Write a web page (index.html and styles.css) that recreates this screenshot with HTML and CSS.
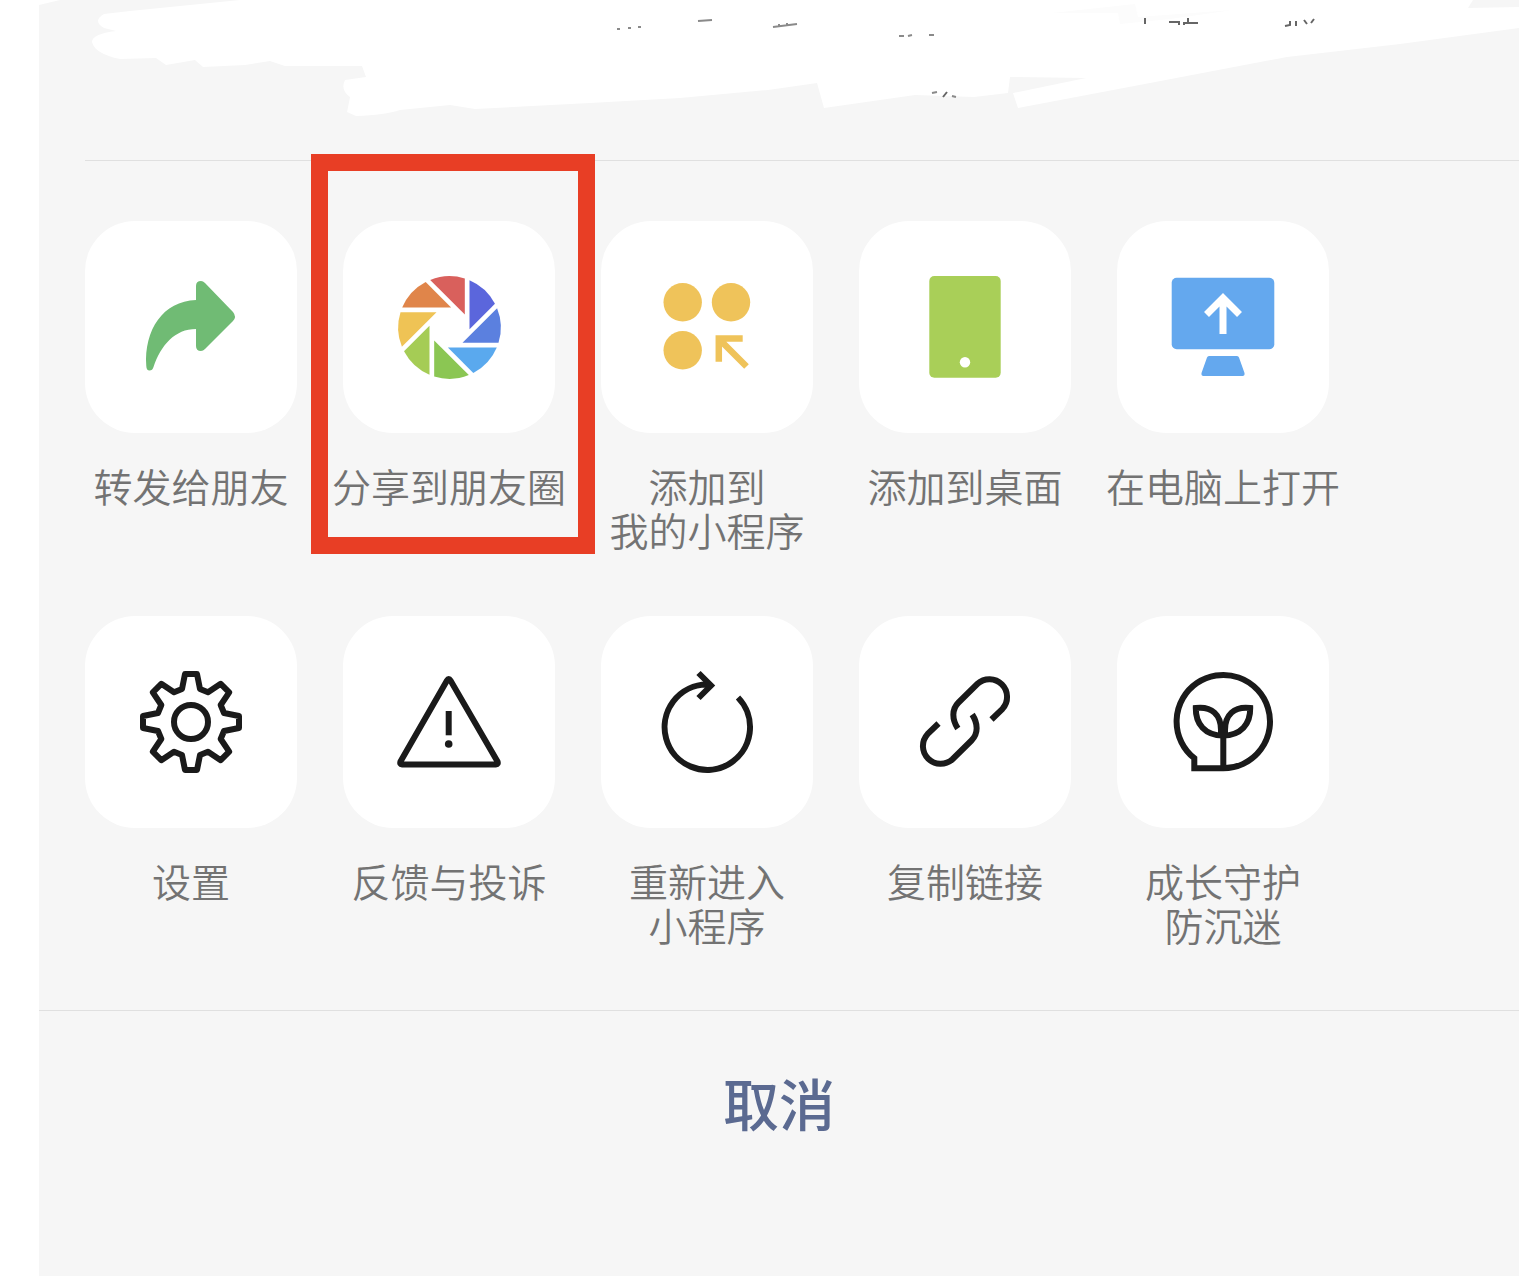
FILE: index.html
```html
<!DOCTYPE html>
<html lang="zh-CN">
<head>
    <meta charset="UTF-8">
    <meta name="viewport" content="width=device-width, initial-scale=1.0">
    <title>小程序菜单</title>
    <link rel="stylesheet" href="styles.css">
</head>
<body>
    <main class="sheet">
        <header class="sheet-header">
            <!-- 涂抹遮盖的标题 -->
            <svg class="smear" viewBox="39 0 1480 160" aria-hidden="true">
                <g fill="#fff">
                    <path d="M39 0H60L39 5Z"/>
                    <path d="M240 0L180 6L130 11L104 14Q92 21 104 28L116 31Q92 34 92 42Q95 54 120 59L156 58L166 65L195 60L203 67L245 65L270 61L285 66L362 66L366 77L345 80Q340 90 350 97L347 112L356 116Q385 115 400 110L450 105L475 109L590 103L680 98L768 90L817 83L824 108L915 95L974 97L1008 93L1010 77L1086 78L1013 93L1018 108L1150 83L1287 57L1400 44L1519 28V7L1468 8L1473 0Z"/>
                </g>
                <path d="M1052 13L1135 4L1138 17L1233 10L1170 19L1120 24L1118 13Z" fill="#fcfcfc"/>
                <g fill="none" stroke="#8a8a8a" stroke-width="2">
                    <path d="M617 29h3M628 28h3M638 27h3M698 21l14-1M773 27l24-3M779 24v3M787 23v3M899 36h5M908 36l4-1M929 35h5M932 93l5-1M952 96l4 1"/>
                    <path d="M943 97l4-5M1145 18v6M1169 22h10v3M1183 23h15M1184 25v-3M1188 18v5M1285 26l5-1v-4M1296 21v5M1304 20l3 4M1314 19l-3 4" stroke="#666"/>
                </g>
            </svg>
        </header>

        <section class="actions">
            <button class="action" type="button">
                <span class="tile">
                    <svg class="icon" viewBox="0 0 120 120" fill="#70bb74">
                        <path d="M65 33V19Q65 14 70 14Q72 14 74 16L102 45Q106 50 102 54L74 82Q72 84 70 84Q65 84 65 79V62C44 62 30 78 22.500 100Q21.500 103.500 18.500 103.500Q15.500 103.500 15.300 99C13 63 32 34 65 33Z"/>
                    </svg>
                </span>
                <span class="label">转发给朋友</span>
            </button>
            <button class="action highlighted" type="button">
                <span class="tile">
                    <svg class="icon" viewBox="0 0 120 120">
                        <defs>
                            <path id="blade" d="M-19.300 -47.600A51.400 51.400 0 0 1 15.300 -49V-13Z"/>
                        </defs>
                        <g transform="translate(60.500 60.500)">
                            <use href="#blade" fill="#d9605c"/>
                            <use href="#blade" fill="#5b66dc" transform="rotate(45)"/>
                            <use href="#blade" fill="#5b80df" transform="rotate(90)"/>
                            <use href="#blade" fill="#5aa9ee" transform="rotate(135)"/>
                            <use href="#blade" fill="#8bc653" transform="rotate(180)"/>
                            <use href="#blade" fill="#a5cc55" transform="rotate(225)"/>
                            <use href="#blade" fill="#efc355" transform="rotate(270)"/>
                            <use href="#blade" fill="#e0854a" transform="rotate(315)"/>
                        </g>
                    </svg>
                </span>
                <span class="label">分享到朋友圈</span>
            </button>
            <button class="action" type="button">
                <span class="tile">
                    <svg class="icon" viewBox="0 0 120 120" fill="#efc35a">
                        <circle cx="35.700" cy="35.300" r="19.200"/>
                        <circle cx="84" cy="35.300" r="19.200"/>
                        <circle cx="35.700" cy="83.300" r="19.200"/>
                        <path d="M71.800 94.700V71.500H95.700M73 73L99.500 99.500" fill="none" stroke="#efc35a" stroke-width="6.500"/>
                    </svg>
                </span>
                <span class="label">添加到<br>我的小程序</span>
            </button>
            <button class="action" type="button">
                <span class="tile">
                    <svg class="icon" viewBox="0 0 120 120">
                        <rect x="24.300" y="9" width="71.400" height="101.700" rx="5" fill="#a9cf58"/>
                        <circle cx="60" cy="95.300" r="5.200" fill="#fff"/>
                    </svg>
                </span>
                <span class="label">添加到桌面</span>
            </button>
            <button class="action" type="button">
                <span class="tile">
                    <svg class="icon" viewBox="0 0 120 120" fill="#64a8ee">
                        <rect x="8.700" y="10.700" width="102.600" height="71.600" rx="5"/>
                        <path d="M46 89H74Q75.500 89 76 90.500L81.500 106Q82 109 79.500 109H40.500Q38 109 38.500 106L44 90.500Q44.500 89 46 89Z"/>
                        <path d="M60 67V31M43.500 47.500L60 31L76.500 47.500" fill="none" stroke="#fff" stroke-width="7"/>
                    </svg>
                </span>
                <span class="label">在电脑上打开</span>
            </button>

            <button class="action" type="button">
                <span class="tile">
                    <svg class="icon line-icon" viewBox="0 0 120 120">
                        <path d="M51 27L54 12H66L69 27L77 30.300L89.700 21.800L98.200 30.300L89.700 43L93 51L108 54V66L93 69L89.700 77L98.200 89.700L89.700 98.200L77 89.700L69 93L66 108H54L51 93L43 89.700L30.300 98.200L21.800 89.700L30.300 77L27 69L12 66V54L27 51L30.300 43L21.800 30.300L30.300 21.800L43 30.300Z" stroke-linejoin="round"/>
                        <circle cx="60" cy="60" r="17"/>
                    </svg>
                </span>
                <span class="label">设置</span>
            </button>
            <button class="action" type="button">
                <span class="tile">
                    <svg class="icon line-icon" viewBox="0 0 120 120">
                        <path d="M58 18.500Q59.700 15.500 61.500 18.500L108.500 99.500Q109.500 102.500 107 102.500H13Q10.500 102.500 11.500 99.500Z" stroke-linejoin="round"/>
                        <path d="M59.700 49V73.300"/>
                        <circle cx="59.700" cy="82" r="3.800" fill="#1a1a1a" stroke="none"/>
                    </svg>
                </span>
                <span class="label">反馈与投诉</span>
            </button>
            <button class="action" type="button">
                <span class="tile">
                    <svg class="icon line-icon" viewBox="0 0 120 120">
                        <path d="M91 35.500A42.700 42.700 0 1 1 59.700 22.500L64 23"/>
                        <path d="M51.500 11L64 23.500L51.500 36"/>
                    </svg>
                </span>
                <span class="label">重新进入<br>小程序</span>
            </button>
            <button class="action" type="button">
                <span class="tile">
                    <svg class="icon line-icon" viewBox="0 0 120 120">
                        <path id="link-half" d="M86.500 57.500L97.500 46.800A17.700 17.700 0 0 0 72.500 21.800L53.500 40.500C46.500 47.500 47 57.500 52.800 66.500"/>
                        <use href="#link-half" transform="rotate(180 60 59.500)"/>
                    </svg>
                </span>
                <span class="label">复制链接</span>
            </button>
            <button class="action" type="button">
                <span class="tile">
                    <svg class="icon line-icon" viewBox="0 0 120 120">
                        <path d="M60.300 106.300H31.300V96.200A46.700 46.700 0 1 1 60.300 106.300V72"/>
                        <path d="M60 73.500C42 73.500 32.500 62 32.800 46C49 44 58 53 58 68V73.500"/>
                        <path d="M60 73.500C78 73.500 87.500 62 87.200 46C71 44 62 53 62 68V73.500"/>
                    </svg>
                </span>
                <span class="label">成长守护<br>防沉迷</span>
            </button>
        </section>

        <button class="cancel" type="button">取消</button>
    </main>
</body>
</html>
```
FILE: styles.css
```css
* {
    box-sizing: border-box;
}
body {
    margin: 0;
    background-color: #fff;
    font-family: "Noto Sans CJK SC", sans-serif;
}
button {
    padding: 0;
    border: none;
    background: none;
    font-family: inherit;
    cursor: pointer;
}
.sheet {
    min-height: 100vh;
    margin: 0 17px 0 39px;
    background-color: #f6f6f6;
}
.sheet-header {
    display: flow-root;
}
.smear {
    display: block;
    width: 100%;
}
.actions {
    display: grid;
    grid-template-columns: repeat(5, 258px);
    row-gap: 65px;
    padding: 61px 0 64px 23px;
    position: relative;
}
.actions::before {
    content: "";
    position: absolute;
    top: 0;
    left: 46px;
    right: 0;
    border-top: 1px solid #e0e0e0;
}
.action {
    position: relative;
    display: flex;
    flex-direction: column;
    align-items: center;
    gap: 30px;
}
.tile {
    display: flex;
    align-items: center;
    justify-content: center;
    width: 212px;
    height: 212px;
    border-radius: 50px;
    background-color: #fff;
}
.icon {
    width: 120px;
    height: 120px;
}
.line-icon {
    fill: none;
    stroke: #1a1a1a;
    stroke-width: 6;
}
.label {
    color: #737373;
    font-size: 39px;
    font-weight: 350;
    line-height: 44px;
    white-space: nowrap;
}
/* 红框标注 */
.highlighted::after {
    content: "";
    position: absolute;
    top: -67px;
    left: -9px;
    right: -17px;
    bottom: -3px;
    border: 17px solid #e83e25;
}
.cancel {
    display: block;
    width: 100%;
    padding: 59px 0;
    border-top: 1px solid #e0e0e0;
    color: #5b6a91;
    font-size: 56px;
    font-weight: 500;
    line-height: 64px;
}
```
